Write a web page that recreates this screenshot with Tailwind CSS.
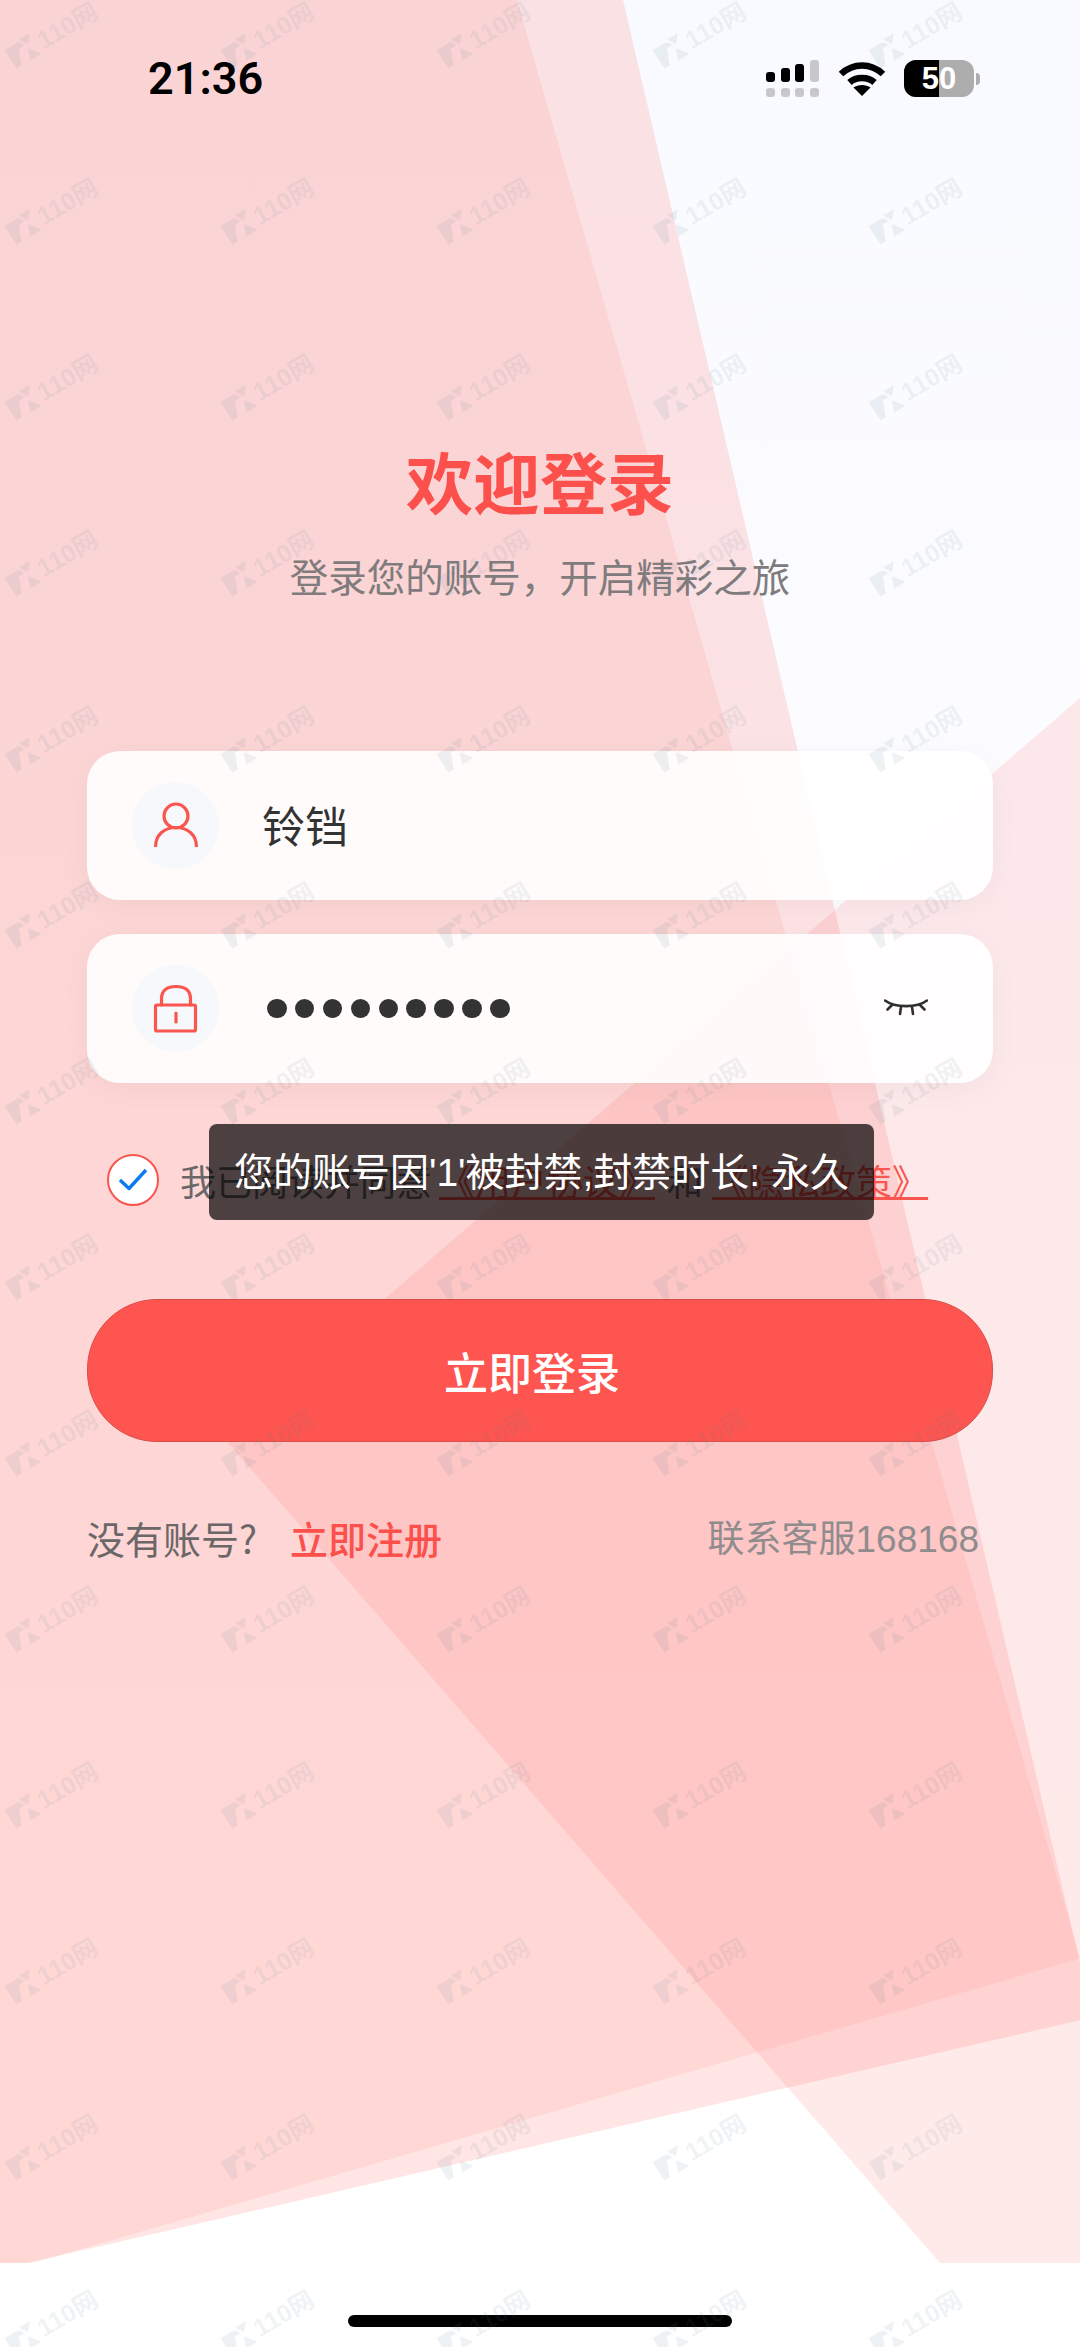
<!DOCTYPE html>
<html lang="zh-CN">
<head>
    <meta charset="UTF-8">
    <meta name="viewport" content="width=device-width, initial-scale=1.0">
    <title>登录</title>
    <script src="https://cdn.jsdelivr.net/npm/@tailwindcss/browser@4"></script>
</head>
<body class="bg-white">
    <div class="relative w-[1080px] h-[2347px] overflow-hidden bg-white font-['Liberation_Sans','Noto_Sans_CJK_SC',sans-serif]">

        <!-- background shapes -->
        <svg class="absolute left-0 top-0" width="1080" height="2263" viewBox="0 0 1080 2263">
            <defs>
                <linearGradient id="base" x1="0" y1="0" x2="0" y2="1">
                    <stop offset="0" stop-color="#f9faff"/>
                    <stop offset="0.5" stop-color="#fdfdff"/>
                    <stop offset="0.85" stop-color="#ffffff"/>
                </linearGradient>
            </defs>
            <rect width="1080" height="2263" fill="url(#base)"/>
            <polygon points="0,0 623,0 1085,1985 1085,2019 27,2263 0,2263" fill="#ff6460" fill-opacity="0.17"/>
            <polygon points="0,0 517,0 1085,1975 1085,1957 33,2263 0,2263" fill="#ff6460" fill-opacity="0.105"/>
            <polygon points="1080,698 224,1438 940,2263 1080,2263" fill="#ff6460" fill-opacity="0.135"/>
        </svg>

        <div class="relative flex flex-col">
            <!-- status bar -->
            <div class="flex justify-between items-start pt-[60px] pl-[148px] pr-[100px] h-[97px]">
                <span class="font-['Roboto',sans-serif] font-semibold text-[45px] leading-[37px] text-black">21:36</span>
                <div class="flex items-start">
                    <svg width="54" height="37" viewBox="0 0 54 37">
                        <rect x="0" y="12" width="9" height="10" rx="3" fill="#000"/>
                        <rect x="15" y="8" width="9" height="14" rx="3" fill="#000"/>
                        <rect x="29" y="4" width="9" height="18" rx="3" fill="#000"/>
                        <rect x="44" y="0" width="9" height="22" rx="3" fill="#c8c8cc"/>
                        <rect x="0" y="28" width="9" height="9" rx="3" fill="#c8c8cc"/>
                        <rect x="15" y="28" width="9" height="9" rx="3" fill="#c8c8cc"/>
                        <rect x="29" y="28" width="9" height="9" rx="3" fill="#c8c8cc"/>
                        <rect x="44" y="28" width="9" height="9" rx="3" fill="#c8c8cc"/>
                    </svg>
                    <svg class="ml-[18px]" width="48" height="37" viewBox="0 0 48 37">
                        <path d="M3 14 C15 2.5 33 2.5 45 14" fill="none" stroke="#000" stroke-width="6.5"/>
                        <path d="M11.5 22.5 C18 16.5 30 16.5 36.5 22.5" fill="none" stroke="#000" stroke-width="6.5"/>
                        <path d="M24 36 L15.5 27.5 C20 24 28 24 32.5 27.5 Z" fill="#000"/>
                    </svg>
                    <div class="ml-[18px] flex items-center">
                        <div class="relative w-[70px] h-[37px] rounded-[12px] overflow-hidden bg-[#adadad]">
                            <div class="absolute left-0 top-0 bottom-0 w-[35px] bg-black"></div>
                            <span class="relative flex h-full items-center justify-center font-bold text-[31px] leading-none text-white">50</span>
                        </div>
                        <div class="ml-[2px] w-[4px] h-[12px] rounded-r-full bg-[#adadad]"></div>
                    </div>
                </div>
            </div>

            <!-- heading -->
            <h1 class="mt-[343px] text-center text-[67px] leading-[80px] font-bold text-[#fc504c] font-['Noto_Sans_CJK_SC',sans-serif]">欢迎登录</h1>
            <p class="mt-[30px] text-center text-[38.5px] leading-[50px] text-[#807b7c] font-['Noto_Sans_CJK_SC',sans-serif]">登录您的账号，开启精彩之旅</p>

            <!-- form -->
            <div class="mt-[151px] px-[87px] flex flex-col gap-[34px]">
                <div class="h-[149px] rounded-[33px] bg-white/90 shadow-[0_6px_30px_rgba(0,0,0,0.04)] flex items-center pl-[45px] pr-[65px]">
                    <div class="w-[87px] h-[87px] rounded-full bg-[#f6f8fb] flex items-center justify-center">
                        <svg width="48" height="52" viewBox="0 0 48 52" fill="none" stroke="#f9564f" stroke-width="3.2">
                            <circle cx="24" cy="16" r="12"/>
                            <path d="M3.5 47 C3.5 35 12 27.5 24 27.5 C36 27.5 44.5 35 44.5 47"/>
                        </svg>
                    </div>
                    <span class="ml-[43px] -mt-[3px] text-[43px] leading-none text-[#333] font-['Noto_Sans_CJK_SC',sans-serif]">铃铛</span>
                </div>
                <div class="h-[149px] rounded-[33px] bg-white/90 shadow-[0_6px_30px_rgba(0,0,0,0.04)] flex items-center pl-[45px] pr-[65px]">
                    <div class="w-[87px] h-[87px] rounded-full bg-[#f6f8fb] flex items-center justify-center">
                        <svg class="mt-[2px]" width="48" height="52" viewBox="0 0 48 52" fill="none" stroke="#f9564f" stroke-width="3.2" stroke-linecap="round">
                            <rect x="3.5" y="21" width="40" height="26" rx="1.5"/>
                            <path d="M9.5 21 V15 C9.5 6 15 2.5 24 2.5 C33 2.5 38.5 6 38.5 15 V21"/>
                            <path d="M24 29 V38"/>
                        </svg>
                    </div>
                    <div class="ml-[48px] flex gap-[8.4px]">
                        <span class="w-[19.5px] h-[19.5px] rounded-full bg-[#333]"></span>
                        <span class="w-[19.5px] h-[19.5px] rounded-full bg-[#333]"></span>
                        <span class="w-[19.5px] h-[19.5px] rounded-full bg-[#333]"></span>
                        <span class="w-[19.5px] h-[19.5px] rounded-full bg-[#333]"></span>
                        <span class="w-[19.5px] h-[19.5px] rounded-full bg-[#333]"></span>
                        <span class="w-[19.5px] h-[19.5px] rounded-full bg-[#333]"></span>
                        <span class="w-[19.5px] h-[19.5px] rounded-full bg-[#333]"></span>
                        <span class="w-[19.5px] h-[19.5px] rounded-full bg-[#333]"></span>
                        <span class="w-[19.5px] h-[19.5px] rounded-full bg-[#333]"></span>
                    </div>
                    <svg class="ml-auto" width="44" height="20" viewBox="0 0 44 20" fill="none" stroke="#2f2f2f" stroke-width="2.6" stroke-linecap="round">
                        <path d="M1 1.5 C11 9 33 9 43 1.5"/>
                        <path d="M8 6 L3.5 10.5"/>
                        <path d="M17 8 L16 15"/>
                        <path d="M28 8 L29 15"/>
                        <path d="M36 6 L40.5 10.5"/>
                    </svg>
                </div>
            </div>

            <!-- agreement -->
            <div class="mt-[71px] pl-[107px] h-[52px] flex items-center text-[36px] leading-[52px] text-[#6b6768] font-['Noto_Sans_CJK_SC',sans-serif]">
                <div class="w-[52px] h-[52px] rounded-full bg-white border-2 border-[#f9564f] flex items-center justify-center">
                    <svg width="30" height="24" viewBox="0 0 30 24" fill="none" stroke="#0a7cf0" stroke-width="3.4" stroke-linejoin="round">
                        <path d="M2 12 L11 20.5 L28 2"/>
                    </svg>
                </div>
                <span class="ml-[21px]">我已阅读并同意</span>
                <span class="ml-[7px] text-[#f9564f] underline underline-offset-[1px] decoration-[3px]">《用户协议》</span>
                <span class="ml-[12px]">和</span>
                <span class="ml-[9px] text-[#f9564f] underline underline-offset-[1px] decoration-[3px]">《隐私政策》</span>
            </div>

            <!-- submit -->
            <div class="mt-[93px] px-[87px]">
                <button type="button" class="w-full h-[143px] rounded-[70px] bg-[#fe5550] border border-[#dc4c48] pr-[16px] text-white text-[44px] font-medium font-['Noto_Sans_CJK_SC',sans-serif]">立即登录</button>
            </div>

            <!-- footer links -->
            <div class="mt-[73px] px-[87px] flex justify-between items-center text-[38px] leading-[50px]">
                <div class="flex">
                    <span class="text-[#6b6768] font-['Noto_Sans_CJK_SC',sans-serif] -mt-[4px]">没有账号?</span>
                    <span class="ml-[33px] -mt-[4px] text-[38px] text-[#fc504c] font-medium font-['Noto_Sans_CJK_SC',sans-serif]">立即注册</span>
                </div>
                <span class="pr-[14px] text-[37px] text-[#908c8e]">联系客服168168</span>
            </div>
        </div>

        <!-- toast -->
        <div class="absolute left-[209px] top-[1124px] w-[665px] h-[96px] rounded-[8px] bg-black/70 flex items-center justify-center text-white text-[39px] leading-none whitespace-nowrap">您的账号因'1'被封禁,封禁时长: 永久</div>

        <!-- home indicator -->
        <div class="absolute left-[348px] bottom-[20px] w-[384px] h-[12px] rounded-full bg-black"></div>

        <!-- watermark -->
        <div id="watermark" class="absolute inset-0 pointer-events-none grid grid-cols-[repeat(5,216px)] auto-rows-[176px]"></div>
    </div>

    <script>
        const mark = `
            <div class="w-[104px] h-[68px] flex items-center justify-center">
                <div class="-rotate-30 flex items-center gap-[3px] shrink-0 text-[#5a8296]/10">
                    <svg width="32" height="26" viewBox="0 0 32 26" fill="currentColor">
                        <path d="M1 3 H17 L21 9 L14 9 L8 25 L2 25 Z"/>
                        <path d="M19 1 H31 L25 9 H23 Z"/>
                        <path d="M22 13 L31 25 H18 Z"/>
                    </svg>
                    <span class="font-['Liberation_Sans','Noto_Sans_CJK_SC',sans-serif] font-bold text-[25px] leading-none whitespace-nowrap">110网</span>
                </div>
            </div>`;
        document.querySelector("#watermark").innerHTML = mark.repeat(70);
    </script>
</body>
</html>
